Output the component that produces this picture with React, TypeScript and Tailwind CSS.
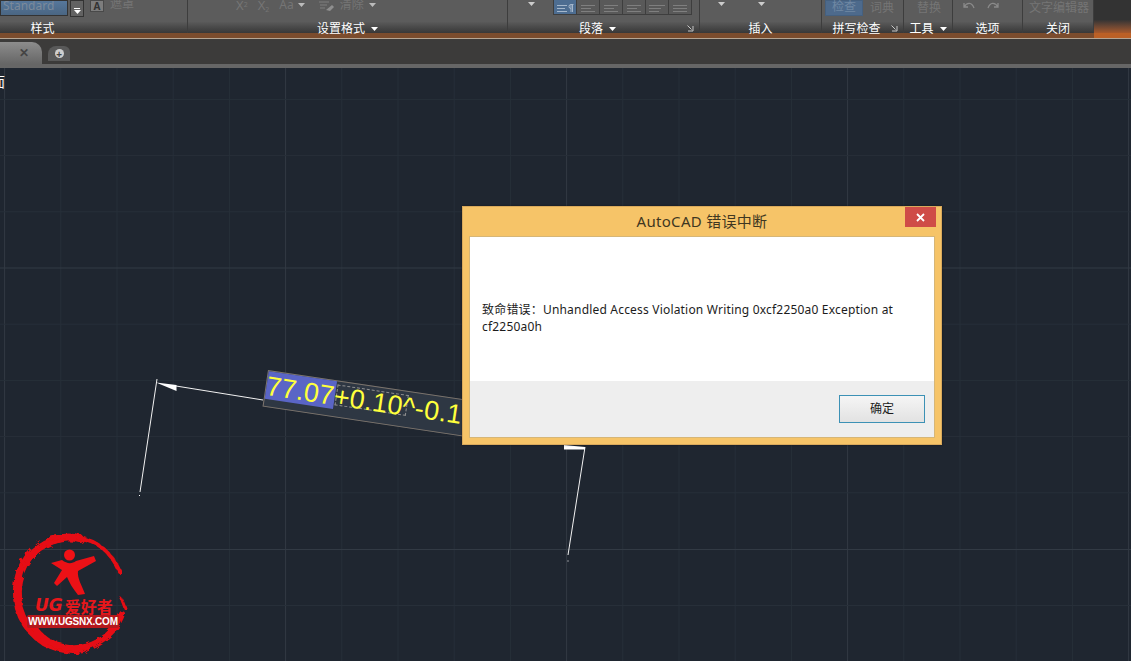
import React from "react";

const FONT = "font-['Noto_Sans','Noto_Sans_CJK_SC',sans-serif]";

function Caret({ className = "" }: { className?: string }) {
  return (
    <svg width="7" height="4" viewBox="0 0 7 4" className={`shrink-0 ${className}`}>
      <path d="M0 0H7L3.5 4Z" fill="currentColor" />
    </svg>
  );
}

function Launcher({ className = "" }: { className?: string }) {
  return (
    <svg width="7" height="7" viewBox="0 0 7 7" className={className}>
      <path d="M0.5 0.5L4.5 4.5M6 1V6H1" fill="none" stroke="#c8c8c8" strokeWidth="1" />
    </svg>
  );
}

function Panel({
  width,
  title,
  caret,
  launcher,
  titleClass = "",
  children,
}: {
  width: string;
  title: string;
  caret?: boolean;
  launcher?: boolean;
  titleClass?: string;
  children?: React.ReactNode;
}) {
  return (
    <div className={`${width} relative flex h-[33px] shrink-0 flex-col border-r border-r-[#3d3d3d] bg-[#5c5c5c]`}>
      <div className="flex h-[22px] items-start overflow-hidden text-[12px] text-[#757575]">{children}</div>
      <div
        className={`relative flex h-[11px] items-center justify-center gap-[6px] bg-gradient-to-b from-[#5a5a5a] to-[#383838] pt-[3px] text-[12px] leading-none text-white ${titleClass}`}
      >
        <span>{title}</span>
        {caret && <Caret className="text-white" />}
        {launcher && <Launcher className="absolute right-[5px] top-[3px]" />}
      </div>
    </div>
  );
}

function AlignButton({ active, lines }: { active?: boolean; lines: number[] }) {
  return (
    <div
      className={`flex h-[15px] w-[23px] items-end justify-center gap-[1px] border-r border-b border-[#3e3e3e] pb-[2px] ${
        active ? "bg-[#4d6d91]" : "bg-[#595959]"
      }`}
    >
      <div className="flex flex-col items-start gap-[2px]">
        {lines.map((w, i) => (
          <div key={i} className={`h-px ${active ? "bg-[#a5b7cb]" : "bg-[#7f7f7f]"}`} style={{ width: w }} />
        ))}
      </div>
      {active && (
        <svg width="6" height="8" viewBox="0 0 6 8" className="shrink-0">
          <path d="M3 8V0.5H5.5M4.5 8V0.5M3 0.5A2 2 0 0 0 3 4.5" fill="none" stroke="#a5b7cb" strokeWidth="1" />
        </svg>
      )}
    </div>
  );
}

function Ribbon() {
  return (
    <div className="flex h-[39px] shrink-0 flex-col">
      <div className="flex h-[33px]">
        <Panel width="w-[188px]" title="样式" titleClass="pr-[102px]">
          <div className="flex h-[16px] w-[68px] items-start overflow-hidden border border-[#333333] bg-gradient-to-b from-[#56779b] to-[#4a6683] pl-[2px] text-[12px] leading-[10px]">
            <span className="text-[#7b8a9b]">Standard</span>
          </div>
          <div className="ml-[2px] flex h-[17px] w-[14px] flex-col items-center justify-end gap-[1px] border border-[#333333] bg-[#626262] pb-[2px] text-white">
            <div className="h-px w-[6px] bg-white" />
            <Caret />
          </div>
          <div className="ml-[6px] flex h-[12px] w-[14px] items-center justify-center border border-[#494949] bg-[#7d7d7d] text-[10px] font-bold leading-none text-[#333333]">
            A
          </div>
          <span className="ml-[6px] -mt-[4px] leading-[16px]">遮罩</span>
        </Panel>
        <Panel width="w-[320px]" title="设置格式" caret>
          <span className="ml-[48px] -mt-[3px] text-[13px] leading-[16px]">
            X<sup className="text-[7px]">2</sup>
          </span>
          <span className="ml-[10px] -mt-[3px] text-[13px] leading-[16px]">
            X<sub className="text-[7px]">2</sub>
          </span>
          <span className="ml-[10px] -mt-[3px] leading-[16px]">Aa</span>
          <Caret className="ml-[4px] mt-[3px] text-[#bbbbbb]" />
          <svg width="17" height="12" viewBox="0 0 17 12" className="ml-[13px] shrink-0">
            <path d="M1 2H11M2 5H9M2 8H7" stroke="#7f7f7f" strokeWidth="1" />
            <path d="M8 10L14 5L16 7L12 11Z" fill="#8f8f8f" />
          </svg>
          <span className="ml-[5px] -mt-[3px] leading-[16px]">清除</span>
          <Caret className="ml-[5px] mt-[3px] text-[#bbbbbb]" />
        </Panel>
        <Panel width="w-[192px]" title="段落" caret launcher titleClass="pr-[12px]">
          <Caret className="ml-[20px] mt-[2px] text-[#cccccc]" />
          <div className="ml-[18px] flex border-l border-[#3e3e3e]">
            <AlignButton active lines={[10, 8, 10]} />
            <AlignButton lines={[14, 10, 14]} />
            <AlignButton lines={[14, 10, 14]} />
            <AlignButton lines={[14, 10, 14]} />
            <AlignButton lines={[16, 12, 10]} />
            <AlignButton lines={[14, 14, 14]} />
          </div>
        </Panel>
        <Panel width="w-[122px]" title="插入">
          <Caret className="ml-[18px] mt-[2px] text-[#cccccc]" />
          <Caret className="ml-[33px] mt-[2px] text-[#cccccc]" />
        </Panel>
        <Panel width="w-[82px]" title="拼写检查" launcher titleClass="pr-[12px]">
          <div className="ml-[3px] flex h-[16px] w-[38px] items-end justify-center border border-[#45607f] bg-[#4d6a8c] leading-[16px] text-[#7088a3]">
            检查
          </div>
          <span className="ml-[7px] leading-[16px]">词典</span>
        </Panel>
        <Panel width="w-[49px]" title="工具" caret>
          <span className="ml-[13px] leading-[16px]">替换</span>
        </Panel>
        <Panel width="w-[70px]" title="选项">
          <svg width="13" height="8" viewBox="0 0 13 8" className="ml-[9px] mt-[2px] shrink-0">
            <path d="M2 1V5H6M2 5C5 0 10 0 12 6" fill="none" stroke="#8a8a8a" strokeWidth="1.3" />
          </svg>
          <svg width="13" height="8" viewBox="0 0 13 8" className="ml-[12px] mt-[2px] shrink-0">
            <path d="M11 1V5H7M11 5C8 0 3 0 1 6" fill="none" stroke="#8a8a8a" strokeWidth="1.3" />
          </svg>
        </Panel>
        <Panel width="w-[71px]" title="关闭">
          <span className="ml-[6px] leading-[16px]">文字编辑器</span>
        </Panel>
        <div className="flex-1 bg-gradient-to-b from-[#333333] from-[60%] to-[#a8592a]" />
      </div>
      <div className="h-[5px] bg-[linear-gradient(to_right,#7b4c2d_1094px,#bb6026_1094px)]" />
      <div className="h-px bg-[#b5a593]" />
    </div>
  );
}

function TabBar() {
  return (
    <div className="flex h-[29px] shrink-0 flex-col bg-[#3c3b3a]">
      <div className="flex h-[25px] items-end">
        <div className="flex h-[22px] w-[42px] items-center justify-end rounded-tr-[10px] bg-gradient-to-b from-[#8d8d8d] to-[#666666] pr-[13px] text-[12px] font-bold leading-none text-[#444444]">
          ✕
        </div>
        <div className="mb-[3px] ml-[6px] flex h-[15px] w-[22px] items-center justify-center rounded-tl-[8px] rounded-tr-[6px] bg-[#595959]">
          <div className="flex size-[9px] items-center justify-center rounded-full bg-[#cfcfcf] text-[10px] font-bold leading-none text-[#444444]">
            +
          </div>
        </div>
      </div>
      <div className="h-[4px] bg-[#666666]" />
    </div>
  );
}

function Grid() {
  const xs: number[] = [];
  for (let i = 0; i < 21; i++) xs.push(4.6 + i * 56.2);
  return (
    <svg className="absolute inset-0 h-full w-full" viewBox="0 0 1131 661">
      {xs.map((x, i) => (
        <line key={i} x1={x} x2={x} y1={68} y2={661} stroke={i % 5 === 0 ? "#323a44" : "#272f39"} strokeWidth="1" />
      ))}
      {[99.4, 155.6, 211.8, 268, 324.2, 380.4, 436.6, 492.8, 549.5, 605.5].map((y, i) => (
        <line key={i} x1={0} x2={1131} y1={y} y2={y} stroke={i === 3 || i === 8 ? "#323a44" : "#272f39"} strokeWidth="1" />
      ))}
      <g stroke="#f2f2f2" fill="none">
        <path d="M157 379L140 492" strokeWidth="1" />
        <path d="M176 386L263 400" strokeWidth="1" />
        <path d="M585 447L568 555" strokeWidth="1" />
      </g>
      <path d="M156 382.5L176.5 385L176.5 391Z" fill="#ffffff" />
      <path d="M564 445L585 447L585 449.5L564 449.5Z" fill="#ffffff" />
      <rect x="139" y="495" width="1" height="1" fill="#ffffff" />
      <rect x="567.5" y="560.5" width="1" height="1" fill="#ffffff" />
    </svg>
  );
}

function DimensionEditor() {
  return (
    <div className="absolute left-[268px] top-[370px] h-[37px] w-[215px] origin-top-left rotate-[8.5deg] border border-[#7c746c] bg-[#2e3743] font-['Liberation_Sans',sans-serif] text-[#ffff3c]">
      <div className="absolute left-0 top-0 h-[28px] w-[69px] bg-[#5a65c6]" />
      <div className="absolute left-[70px] top-[3px] h-[21px] w-[72px] border border-dashed border-[#8f8f8f]" />
      <div className="absolute left-[0px] -top-[1px] whitespace-nowrap text-[27px] leading-[32px] tracking-[0.15px]">77.07+0.10^-0.1</div>
    </div>
  );
}

function Logo() {
  return (
    <div className="absolute left-[8px] top-[530px] h-[128px] w-[124px]">
      <svg width="124" height="128" viewBox="8 530 124 128" className="absolute inset-0">
        <defs>
          <filter id="rough" x="-10%" y="-10%" width="120%" height="120%">
            <feTurbulence type="fractalNoise" baseFrequency="0.16" numOctaves="2" seed="4" />
            <feDisplacementMap in="SourceGraphic" scale="6" />
          </filter>
        </defs>
        <g filter="url(#rough)" fill="none" stroke="#e60c12" strokeLinecap="round">
          <path d="M80 539C62 534 40 542 28 558C14 576 13 604 26 624C38 643 62 653 84 649" strokeWidth="8" />
          <path d="M36 630C50 648 76 654 98 642C110 635 118 626 122 614" strokeWidth="6" />
          <path d="M78 538C98 540 112 554 120 572" strokeWidth="4" />
          <path d="M64 540C46 541 32 552 24 566" strokeWidth="4" />
          <path d="M122 600L125 608" strokeWidth="3" />
        </g>
        <circle cx="69.5" cy="555" r="5.5" fill="#f01116" />
        <path
          d="M51 563L62 560C67 564 72 564 76 561L94 556L96 561L78 571C77 578 82 586 85 594L78 595C73 589 69 582 67 577L57 586L54 583L62 570Z"
          fill="#ec1116"
        />
      </svg>
      <div className="absolute left-[27px] top-[67px] flex h-[17px] w-[84px] items-center whitespace-nowrap text-[#e8171b]">
        <span className="font-['DejaVu_Sans',sans-serif] text-[17px] font-bold italic leading-none">UG</span>
        <span className="ml-[2px] font-['Noto_Sans_CJK_SC',sans-serif] text-[16px] font-bold leading-none">爱好者</span>
      </div>
      <div className="absolute left-[19px] top-[85px] flex h-[13px] w-[92px] items-center justify-center whitespace-nowrap rounded-[2px] bg-[#b5181c] font-['Liberation_Sans',sans-serif] text-[10px] font-bold leading-none tracking-[-0.2px] text-white">
        WWW.UGSNX.COM
      </div>
    </div>
  );
}

function ErrorDialog() {
  return (
    <div className="absolute left-[462px] top-[206px] z-10 flex h-[239px] w-[480px] flex-col border border-[#d9a95c] bg-[#f6c468] px-[6px] pb-[6px] shadow-[0_0_2px_rgba(0,0,0,0.4)]">
      <div className="relative flex h-[29px] shrink-0 items-center justify-center text-[15px] tracking-[0.3px] text-[#3f3721]">
        <span className="-mt-[1px]">AutoCAD 错误中断</span>
        <div className="absolute top-0 right-[-1px] flex h-[20px] w-[31px] items-center justify-center bg-[#cf4c47]">
          <svg width="9" height="9" viewBox="0 0 9 9">
            <path d="M1 1L8 8M8 1L1 8" stroke="#ffffff" strokeWidth="1.8" />
          </svg>
        </div>
      </div>
      <div className="flex flex-1 flex-col border border-[#d6b677] bg-white">
        <div className="h-[144px] shrink-0 pl-[12px] pr-[20px] pt-[64px] text-[12px] leading-[17px] tracking-[0.19px] text-[#1c1c1c]">
          致命错误：Unhandled Access Violation Writing 0xcf2250a0 Exception at cf2250a0h
        </div>
        <div className="flex flex-1 items-start justify-end bg-[#eeeeee] pr-[9px] pt-[14px]">
          <button className="h-[28px] w-[86px] border border-[#3c91b5] bg-gradient-to-b from-[#f5f5f5] to-[#e2e2e2] text-[12px] text-[#1c1c1c]">
            确定
          </button>
        </div>
      </div>
    </div>
  );
}

export default function App() {
  return (
    <div className={`flex h-[661px] w-[1131px] flex-col overflow-hidden bg-[#1f2630] ${FONT}`}>
      <Ribbon />
      <TabBar />
      <div className="relative flex-1 overflow-hidden">
        <div className="absolute inset-x-0 -top-[68px] h-[661px]">
          <Grid />
          <div className="absolute -left-[9px] top-[73px] text-[14px] leading-[18px] text-white">面</div>
          <DimensionEditor />
          <Logo />
          <ErrorDialog />
        </div>
      </div>
    </div>
  );
}
